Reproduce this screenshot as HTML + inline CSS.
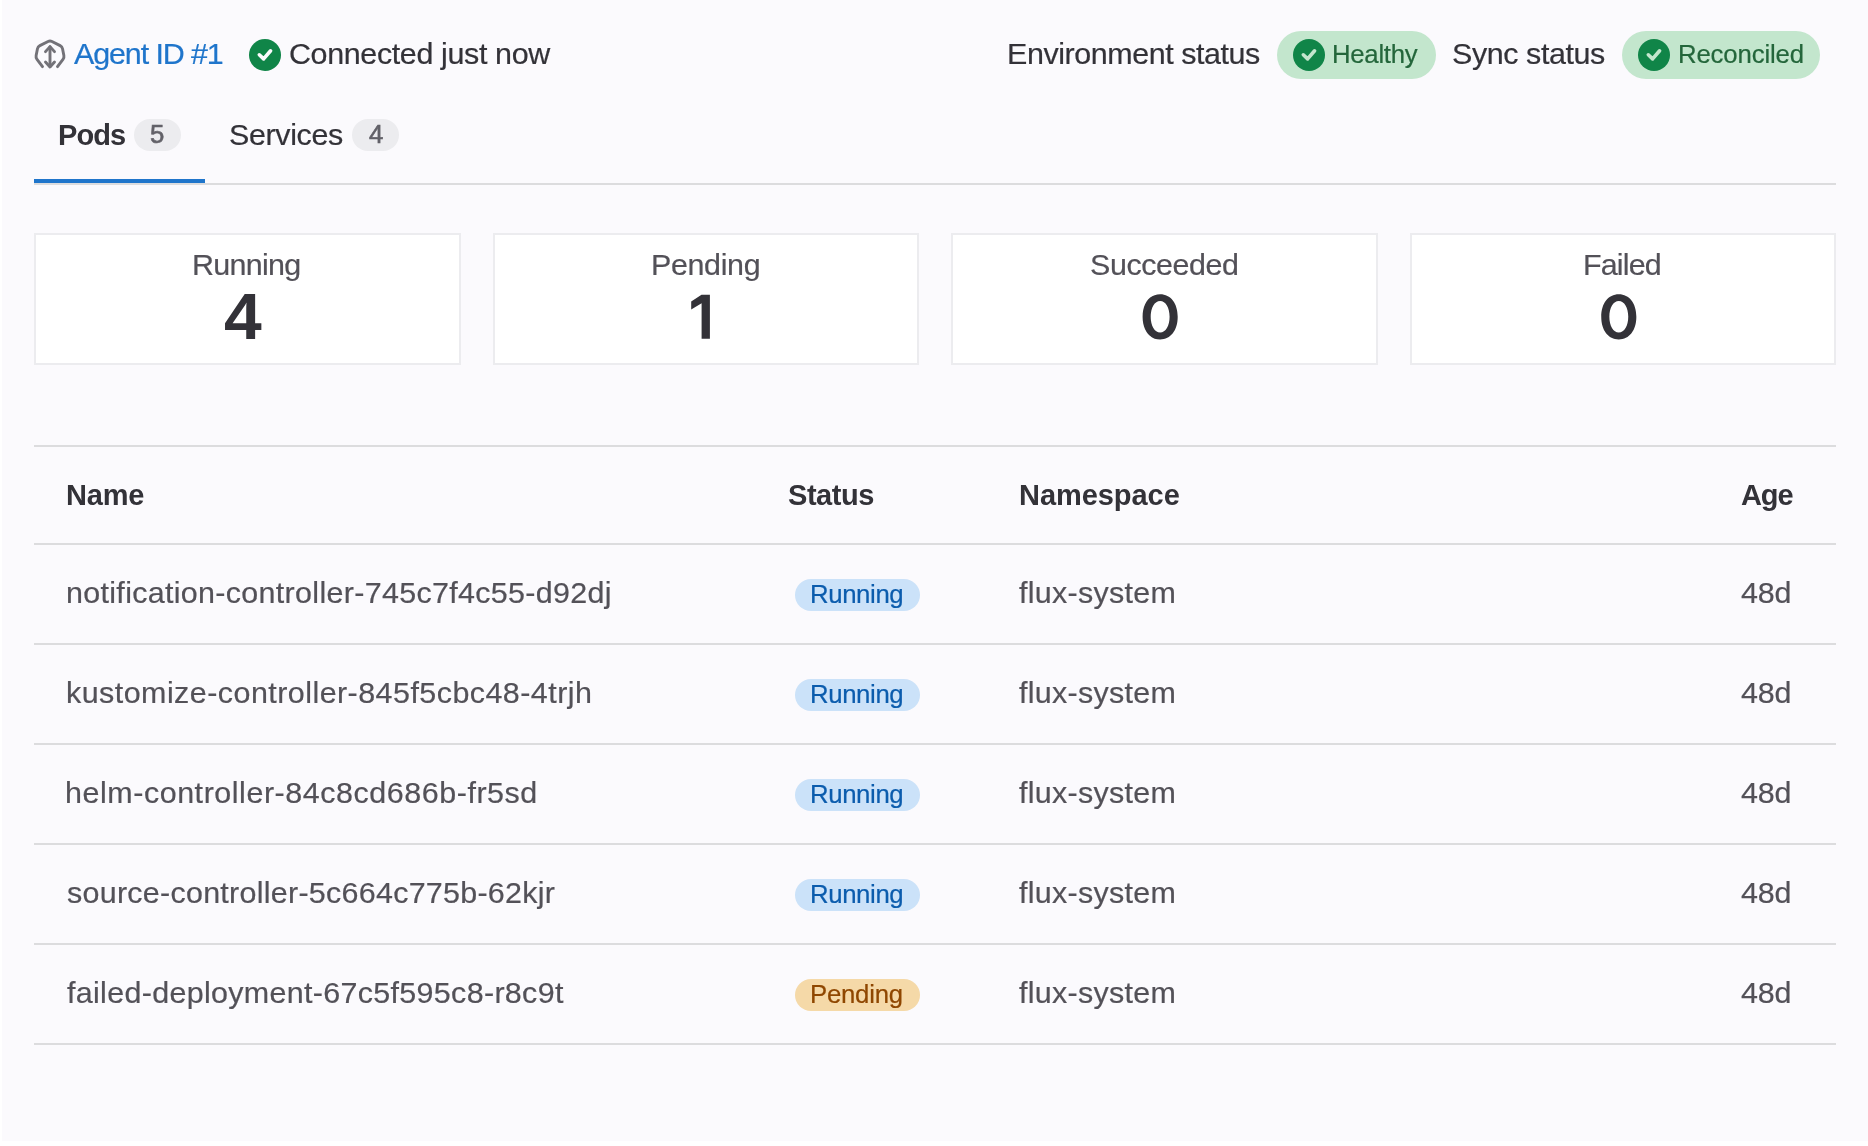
<!DOCTYPE html>
<html><head><meta charset="utf-8"><style>
html,body{margin:0;padding:0;background:#fff;width:1868px;height:1146px;overflow:hidden;position:relative}
.t{position:absolute;white-space:nowrap;font-family:"Liberation Sans", sans-serif;will-change:transform}
</style></head><body>
<div style="position:absolute;left:2px;top:0px;width:1866px;height:1141px;background:#fbfafd"></div>
<svg style="position:absolute;left:0;top:0" width="100" height="100" viewBox="0 0 100 100" fill="none" stroke="#737278" stroke-width="2.9" stroke-linecap="round" stroke-linejoin="round"><path d="M42.5,66.7 L37.02,59.36 Q35.7,57.6 36.13,55.44 L37.47,48.76 Q37.9,46.6 39.86,45.61 L48.04,41.49 Q50,40.5 51.96,41.49 L60.14,45.61 Q62.1,46.6 62.53,48.76 L63.87,55.44 Q64.3,57.6 62.98,59.36 L57.5,66.7"/><line x1="50" y1="47" x2="50" y2="66.5"/><polyline points="45.5,51.6 50,46.6 54.5,51.6"/><polyline points="45.5,62.1 50,67 54.5,62.1"/></svg>
<svg style="position:absolute;left:249px;top:39px" width="32" height="32" viewBox="0 0 32 32"><circle cx="16" cy="16" r="16" fill="#108548"/><polyline points="10.3,15.8 14.6,19.9 21.6,11.8" fill="none" stroke="#fbfafd" stroke-width="3.6" stroke-linecap="round" stroke-linejoin="round"/></svg>
<div style="position:absolute;left:1277px;top:31px;width:159px;height:48px;background:#c3e6cd;border-radius:24px"></div>
<svg style="position:absolute;left:1293px;top:39px" width="32" height="32" viewBox="0 0 32 32"><circle cx="16" cy="16" r="16" fill="#108548"/><polyline points="10.3,15.8 14.6,19.9 21.6,11.8" fill="none" stroke="#c3e6cd" stroke-width="3.6" stroke-linecap="round" stroke-linejoin="round"/></svg>
<div style="position:absolute;left:1622px;top:31px;width:198px;height:48px;background:#c3e6cd;border-radius:24px"></div>
<svg style="position:absolute;left:1638px;top:39px" width="32" height="32" viewBox="0 0 32 32"><circle cx="16" cy="16" r="16" fill="#108548"/><polyline points="10.3,15.8 14.6,19.9 21.6,11.8" fill="none" stroke="#c3e6cd" stroke-width="3.6" stroke-linecap="round" stroke-linejoin="round"/></svg>
<div style="position:absolute;left:134px;top:119px;width:47px;height:32px;background:#ececef;border-radius:16px"></div>
<div style="position:absolute;left:352px;top:119px;width:47px;height:32px;background:#ececef;border-radius:16px"></div>
<div style="position:absolute;left:34px;top:183px;width:1802px;height:2px;background:#dcdcde"></div>
<div style="position:absolute;left:34px;top:179px;width:171px;height:4px;background:#1f75cb"></div>
<div style="position:absolute;left:34px;top:233px;width:427px;height:132px;background:#fff;border:2px solid #ececef;box-sizing:border-box"></div>
<div style="position:absolute;left:493px;top:233px;width:426px;height:132px;background:#fff;border:2px solid #ececef;box-sizing:border-box"></div>
<div style="position:absolute;left:951px;top:233px;width:427px;height:132px;background:#fff;border:2px solid #ececef;box-sizing:border-box"></div>
<div style="position:absolute;left:1410px;top:233px;width:426px;height:132px;background:#fff;border:2px solid #ececef;box-sizing:border-box"></div>
<div style="position:absolute;left:34px;top:445px;width:1802px;height:2px;background:#dcdcde"></div>
<div style="position:absolute;left:34px;top:543px;width:1802px;height:2px;background:#dcdcde"></div>
<div style="position:absolute;left:34px;top:643px;width:1802px;height:2px;background:#dcdcde"></div>
<div style="position:absolute;left:34px;top:743px;width:1802px;height:2px;background:#dcdcde"></div>
<div style="position:absolute;left:34px;top:843px;width:1802px;height:2px;background:#dcdcde"></div>
<div style="position:absolute;left:34px;top:943px;width:1802px;height:2px;background:#dcdcde"></div>
<div style="position:absolute;left:34px;top:1043px;width:1802px;height:2px;background:#dcdcde"></div>
<div style="position:absolute;left:795px;top:579px;width:125px;height:32px;background:#cbe2f9;border-radius:16px"></div>
<div style="position:absolute;left:795px;top:679px;width:125px;height:32px;background:#cbe2f9;border-radius:16px"></div>
<div style="position:absolute;left:795px;top:779px;width:125px;height:32px;background:#cbe2f9;border-radius:16px"></div>
<div style="position:absolute;left:795px;top:879px;width:125px;height:32px;background:#cbe2f9;border-radius:16px"></div>
<div style="position:absolute;left:795px;top:979px;width:125px;height:32px;background:#f5d9a8;border-radius:16px"></div>
<div class="t" style="left:74.40px;top:40.25px;font-size:29px;line-height:29px;font-weight:400;color:#1f75cb;letter-spacing:-1.050px;transform:scaleX(1.0500);transform-origin:0 50%;-webkit-text-stroke:0.2px #1f75cb;">Agent ID #1</div>
<div class="t" style="left:288.65px;top:40.25px;font-size:29px;line-height:29px;font-weight:400;color:#333238;letter-spacing:-0.348px;transform:scaleX(1.0500);transform-origin:0 50%;-webkit-text-stroke:0.2px #333238;">Connected just now</div>
<div class="t" style="left:1007.20px;top:40.25px;font-size:29px;line-height:29px;font-weight:400;color:#333238;letter-spacing:-0.410px;transform:scaleX(1.0500);transform-origin:0 50%;-webkit-text-stroke:0.2px #333238;">Environment status</div>
<div class="t" style="left:1452.25px;top:40.25px;font-size:29px;line-height:29px;font-weight:400;color:#333238;letter-spacing:-0.392px;transform:scaleX(1.0500);transform-origin:0 50%;-webkit-text-stroke:0.2px #333238;">Sync status</div>
<div class="t" style="left:1332.44px;top:41.54px;font-size:25px;line-height:25px;font-weight:400;color:#24663b;letter-spacing:-0.269px;transform:scaleX(1.0300);transform-origin:0 50%;-webkit-text-stroke:0.2px #24663b;">Healthy</div>
<div class="t" style="left:1677.94px;top:41.54px;font-size:25px;line-height:25px;font-weight:400;color:#24663b;letter-spacing:-0.151px;transform:scaleX(1.0300);transform-origin:0 50%;-webkit-text-stroke:0.2px #24663b;">Reconciled</div>
<div class="t" style="left:58.00px;top:121.25px;font-size:29px;line-height:29px;font-weight:700;color:#333238;letter-spacing:-0.924px;">Pods</div>
<div class="t" style="left:229.25px;top:121.25px;font-size:29px;line-height:29px;font-weight:400;color:#333238;letter-spacing:-0.338px;transform:scaleX(1.0500);transform-origin:0 50%;-webkit-text-stroke:0.2px #333238;">Services</div>
<div class="t" style="left:150.17px;top:122.04px;font-size:25px;line-height:25px;font-weight:400;color:#626168;letter-spacing:0.000px;transform:scaleX(1.0300);transform-origin:0 50%;-webkit-text-stroke:0.6px #626168;">5</div>
<div class="t" style="left:368.80px;top:121.84px;font-size:25px;line-height:25px;font-weight:400;color:#626168;letter-spacing:0.000px;transform:scaleX(1.0300);transform-origin:0 50%;-webkit-text-stroke:0.6px #626168;">4</div>
<div class="t" style="left:192.40px;top:250.95px;font-size:29px;line-height:29px;font-weight:400;color:#535158;letter-spacing:-0.658px;transform:scaleX(1.0500);transform-origin:0 50%;-webkit-text-stroke:0.2px #535158;">Running</div>
<div class="t" style="left:650.50px;top:250.95px;font-size:29px;line-height:29px;font-weight:400;color:#535158;letter-spacing:-0.344px;transform:scaleX(1.0500);transform-origin:0 50%;-webkit-text-stroke:0.2px #535158;">Pending</div>
<div class="t" style="left:1089.75px;top:250.95px;font-size:29px;line-height:29px;font-weight:400;color:#535158;letter-spacing:-0.409px;transform:scaleX(1.0500);transform-origin:0 50%;-webkit-text-stroke:0.2px #535158;">Succeeded</div>
<div class="t" style="left:1583.10px;top:250.95px;font-size:29px;line-height:29px;font-weight:400;color:#535158;letter-spacing:-0.809px;transform:scaleX(1.0500);transform-origin:0 50%;-webkit-text-stroke:0.2px #535158;">Failed</div>
<div class="t" style="left:225.00px;top:284.92px;font-size:64px;line-height:64px;font-weight:700;color:#333238;letter-spacing:0.000px;transform:scaleX(1.0600);transform-origin:18.00px 50%;">4</div>
<div class="t" style="left:66.20px;top:481.45px;font-size:29px;line-height:29px;font-weight:700;color:#333238;letter-spacing:-0.219px;">Name</div>
<div class="t" style="left:787.80px;top:481.25px;font-size:29px;line-height:29px;font-weight:700;color:#333238;letter-spacing:-0.460px;">Status</div>
<div class="t" style="left:1018.60px;top:481.25px;font-size:29px;line-height:29px;font-weight:700;color:#333238;letter-spacing:-0.048px;">Namespace</div>
<div class="t" style="left:1740.50px;top:481.25px;font-size:29px;line-height:29px;font-weight:700;color:#333238;letter-spacing:-1.079px;">Age</div>
<div class="t" style="left:66.25px;top:578.95px;font-size:29px;line-height:29px;font-weight:400;color:#535158;letter-spacing:0.300px;transform:scaleX(1.0500);transform-origin:0 50%;-webkit-text-stroke:0.2px #535158;">notification-controller-745c7f4c55-d92dj</div>
<div class="t" style="left:809.74px;top:581.54px;font-size:25px;line-height:25px;font-weight:400;color:#0b5cad;letter-spacing:-0.361px;transform:scaleX(1.0300);transform-origin:0 50%;-webkit-text-stroke:0.2px #0b5cad;">Running</div>
<div class="t" style="left:1019.00px;top:578.95px;font-size:29px;line-height:29px;font-weight:400;color:#535158;letter-spacing:0.272px;transform:scaleX(1.0500);transform-origin:0 50%;-webkit-text-stroke:0.2px #535158;">flux-system</div>
<div class="t" style="left:1741.00px;top:578.95px;font-size:29px;line-height:29px;font-weight:400;color:#535158;letter-spacing:-0.152px;transform:scaleX(1.0500);transform-origin:0 50%;-webkit-text-stroke:0.2px #535158;">48d</div>
<div class="t" style="left:66.25px;top:678.95px;font-size:29px;line-height:29px;font-weight:400;color:#535158;letter-spacing:0.437px;transform:scaleX(1.0500);transform-origin:0 50%;-webkit-text-stroke:0.2px #535158;">kustomize-controller-845f5cbc48-4trjh</div>
<div class="t" style="left:809.74px;top:681.54px;font-size:25px;line-height:25px;font-weight:400;color:#0b5cad;letter-spacing:-0.361px;transform:scaleX(1.0300);transform-origin:0 50%;-webkit-text-stroke:0.2px #0b5cad;">Running</div>
<div class="t" style="left:1019.00px;top:678.95px;font-size:29px;line-height:29px;font-weight:400;color:#535158;letter-spacing:0.272px;transform:scaleX(1.0500);transform-origin:0 50%;-webkit-text-stroke:0.2px #535158;">flux-system</div>
<div class="t" style="left:1741.00px;top:678.95px;font-size:29px;line-height:29px;font-weight:400;color:#535158;letter-spacing:-0.152px;transform:scaleX(1.0500);transform-origin:0 50%;-webkit-text-stroke:0.2px #535158;">48d</div>
<div class="t" style="left:65.20px;top:778.95px;font-size:29px;line-height:29px;font-weight:400;color:#535158;letter-spacing:0.522px;transform:scaleX(1.0500);transform-origin:0 50%;-webkit-text-stroke:0.2px #535158;">helm-controller-84c8cd686b-fr5sd</div>
<div class="t" style="left:809.74px;top:781.54px;font-size:25px;line-height:25px;font-weight:400;color:#0b5cad;letter-spacing:-0.361px;transform:scaleX(1.0300);transform-origin:0 50%;-webkit-text-stroke:0.2px #0b5cad;">Running</div>
<div class="t" style="left:1019.00px;top:778.95px;font-size:29px;line-height:29px;font-weight:400;color:#535158;letter-spacing:0.272px;transform:scaleX(1.0500);transform-origin:0 50%;-webkit-text-stroke:0.2px #535158;">flux-system</div>
<div class="t" style="left:1741.00px;top:778.95px;font-size:29px;line-height:29px;font-weight:400;color:#535158;letter-spacing:-0.152px;transform:scaleX(1.0500);transform-origin:0 50%;-webkit-text-stroke:0.2px #535158;">48d</div>
<div class="t" style="left:67.30px;top:878.95px;font-size:29px;line-height:29px;font-weight:400;color:#535158;letter-spacing:0.259px;transform:scaleX(1.0500);transform-origin:0 50%;-webkit-text-stroke:0.2px #535158;">source-controller-5c664c775b-62kjr</div>
<div class="t" style="left:809.74px;top:881.54px;font-size:25px;line-height:25px;font-weight:400;color:#0b5cad;letter-spacing:-0.361px;transform:scaleX(1.0300);transform-origin:0 50%;-webkit-text-stroke:0.2px #0b5cad;">Running</div>
<div class="t" style="left:1019.00px;top:878.95px;font-size:29px;line-height:29px;font-weight:400;color:#535158;letter-spacing:0.272px;transform:scaleX(1.0500);transform-origin:0 50%;-webkit-text-stroke:0.2px #535158;">flux-system</div>
<div class="t" style="left:1741.00px;top:878.95px;font-size:29px;line-height:29px;font-weight:400;color:#535158;letter-spacing:-0.152px;transform:scaleX(1.0500);transform-origin:0 50%;-webkit-text-stroke:0.2px #535158;">48d</div>
<div class="t" style="left:67.30px;top:978.95px;font-size:29px;line-height:29px;font-weight:400;color:#535158;letter-spacing:0.305px;transform:scaleX(1.0500);transform-origin:0 50%;-webkit-text-stroke:0.2px #535158;">failed-deployment-67c5f595c8-r8c9t</div>
<div class="t" style="left:810.44px;top:981.54px;font-size:25px;line-height:25px;font-weight:400;color:#8f4700;letter-spacing:-0.228px;transform:scaleX(1.0300);transform-origin:0 50%;-webkit-text-stroke:0.2px #8f4700;">Pending</div>
<div class="t" style="left:1019.00px;top:978.95px;font-size:29px;line-height:29px;font-weight:400;color:#535158;letter-spacing:0.272px;transform:scaleX(1.0500);transform-origin:0 50%;-webkit-text-stroke:0.2px #535158;">flux-system</div>
<div class="t" style="left:1741.00px;top:978.95px;font-size:29px;line-height:29px;font-weight:400;color:#535158;letter-spacing:-0.152px;transform:scaleX(1.0500);transform-origin:0 50%;-webkit-text-stroke:0.2px #535158;">48d</div>
<svg style="position:absolute;left:0;top:0" width="1700" height="360" viewBox="0 0 1700 360"><path fill-rule="evenodd" fill="#333238" d="M1142.60,316.85 C1142.60,303.26 1149.62,294.20 1160.15,294.20 C1170.68,294.20 1177.70,303.26 1177.70,316.85 C1177.70,330.44 1170.68,339.50 1160.15,339.50 C1149.62,339.50 1142.60,330.44 1142.60,316.85 Z M1150.70,316.80 C1150.70,307.64 1154.67,301.00 1160.15,301.00 C1165.63,301.00 1169.60,307.64 1169.60,316.80 C1169.60,325.96 1165.63,332.60 1160.15,332.60 C1154.67,332.60 1150.70,325.96 1150.70,316.80 Z"/></svg>
<svg style="position:absolute;left:0;top:0" width="1700" height="360" viewBox="0 0 1700 360"><path fill-rule="evenodd" fill="#333238" d="M1601.25,316.85 C1601.25,303.26 1608.27,294.20 1618.80,294.20 C1629.33,294.20 1636.35,303.26 1636.35,316.85 C1636.35,330.44 1629.33,339.50 1618.80,339.50 C1608.27,339.50 1601.25,330.44 1601.25,316.85 Z M1609.35,316.80 C1609.35,307.64 1613.32,301.00 1618.80,301.00 C1624.28,301.00 1628.25,307.64 1628.25,316.80 C1628.25,325.96 1624.28,332.60 1618.80,332.60 C1613.32,332.60 1609.35,325.96 1609.35,316.80 Z"/></svg>
<svg style="position:absolute;left:0;top:0" width="760" height="360" viewBox="0 0 760 360"><polygon fill="#333238" points="701.5,294.8 709.9,294.8 709.9,338.8 701.6,338.8 701.6,303.2 691.2,309.4 691.2,301.6"/></svg>
</body></html>
